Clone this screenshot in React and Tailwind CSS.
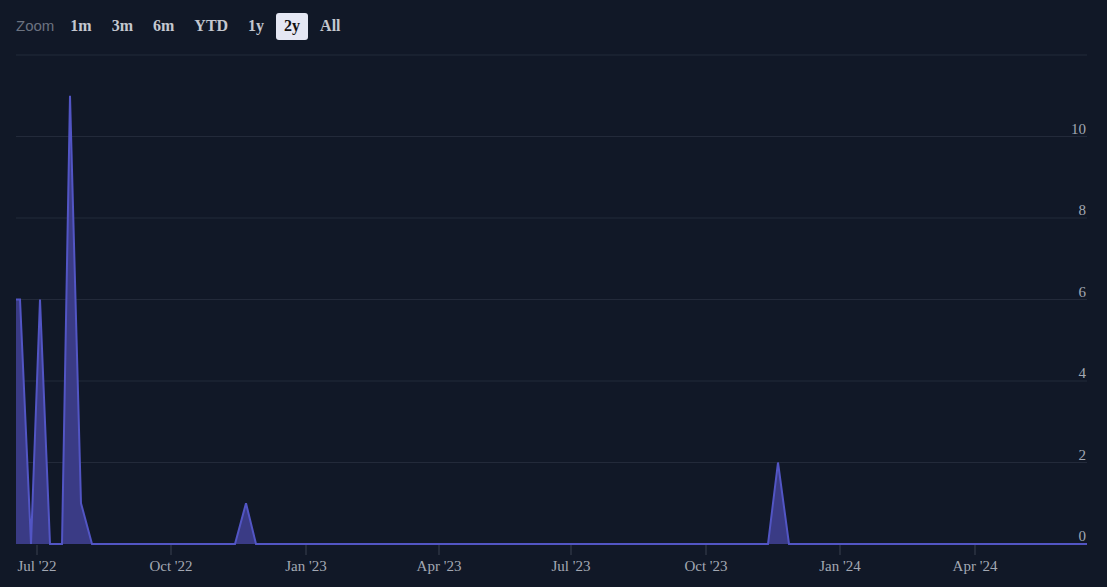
export default function App() {
  const y = (v) => 544 - v * 40.75;
  const pts = [[16,6],[20,6],[31,0],[40,6],[50,0],[62,0],[70,11],[81,1],[92,0],[235,0],[246,1],[256,0],[768,0],[778,2],[789,0],[1087,0]];
  const line = pts.map(([x, v]) => `${x},${y(v)}`).join(" ");
  const area = `16,544 ${line} 1087,544`;
  const grid = [0, 2, 4, 6, 8, 10];
  const ticks = [[37,"Jul '22"],[171,"Oct '22"],[306,"Jan '23"],[439,"Apr '23"],[571,"Jul '23"],[706,"Oct '23"],[840,"Jan '24"],[975,"Apr '24"]];
  const btns = ["1m","3m","6m","YTD","1y","2y","All"];
  return (
    <div className="w-[1107px] h-[587px] bg-[#111827] relative overflow-hidden" style={{fontFamily:'"Liberation Serif", serif'}}>
      <div className="flex items-center gap-[4px] pl-[16px] pt-[12px] h-[40px]">
        <span className="text-[15px] text-[#6b7280] mr-[4px]" style={{fontFamily:'"Liberation Sans", sans-serif'}}>Zoom</span>
        {btns.map((b) => (
          <span key={b} className={`px-[8px] h-[27px] flex items-center rounded-[3px] text-[16px] font-bold ${b==="2y"?"bg-[#e5e7f3] text-[#111]":"text-[#c4c7cf]"}`}>{b}</span>
        ))}
      </div>
      <svg className="absolute left-0 top-0" width="1107" height="587">
        <line x1="16" x2="1087" y1="55" y2="55" stroke="#232a3a" />
        {grid.slice(1).map((g) => (
          <line key={g} x1="16" x2="1087" y1={y(g)} y2={y(g)} stroke="#232a3a" />
        ))}
        <polygon points={area} fill="#3a3b85" />
        <polyline points={line} fill="none" stroke="#5255c4" strokeWidth="2" />
        {ticks.map(([x, t]) => (
          <g key={t}>
            <line x1={x} x2={x} y1="545" y2="555" stroke="#3a4150" />
            <text x={x} y="571" textAnchor="middle" fill="#a3a8b3" fontSize="15" fontFamily="Liberation Serif">{t}</text>
          </g>
        ))}
        {grid.map((g) => (
          <text key={g} x="1086" y={y(g) - 3} textAnchor="end" fill="#a3a8b3" fontSize="15" fontFamily="Liberation Serif">{g}</text>
        ))}
      </svg>
    </div>
  );
}
